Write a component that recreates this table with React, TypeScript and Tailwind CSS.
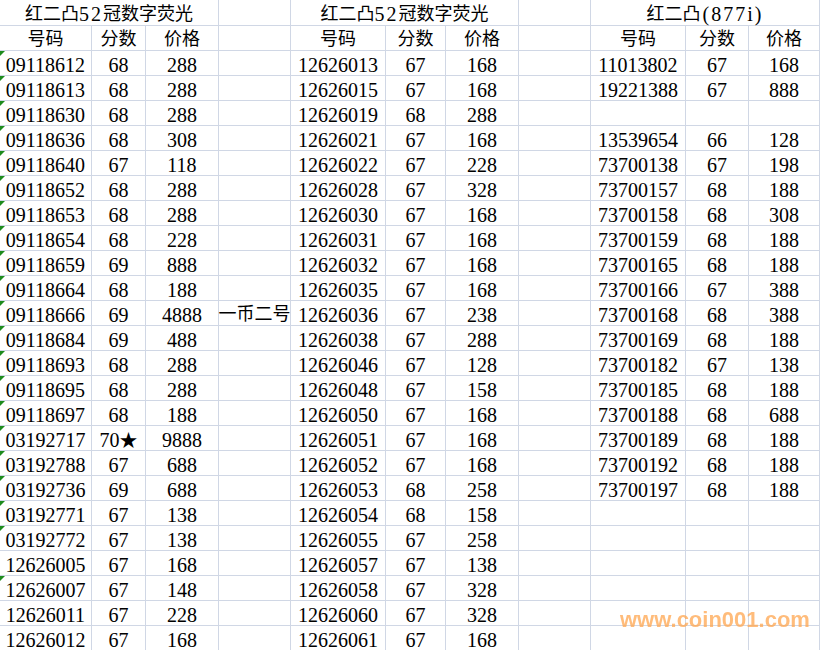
import React from "react";

type Row = {
  a: string;
  b: string;
  c: string;
  d?: string;
  e: string;
  f: string;
  g: string;
  i?: string;
  j?: string;
  k?: string;
  mark?: boolean;
};

const left: [string, string, string, boolean][] = [
  ["09118612", "68", "288", true],
  ["09118613", "68", "288", true],
  ["09118630", "68", "288", true],
  ["09118636", "68", "308", true],
  ["09118640", "67", "118", true],
  ["09118652", "68", "288", true],
  ["09118653", "68", "288", true],
  ["09118654", "68", "228", true],
  ["09118659", "69", "888", true],
  ["09118664", "68", "188", true],
  ["09118666", "69", "4888", true],
  ["09118684", "69", "488", true],
  ["09118693", "68", "288", true],
  ["09118695", "68", "288", true],
  ["09118697", "68", "188", true],
  ["03192717", "70★", "9888", true],
  ["03192788", "67", "688", true],
  ["03192736", "69", "688", true],
  ["03192771", "67", "138", true],
  ["03192772", "67", "138", true],
  ["12626005", "67", "168", false],
  ["12626007", "67", "148", true],
  ["12626011", "67", "228", false],
  ["12626012", "67", "168", false],
];

const middle: [string, string, string][] = [
  ["12626013", "67", "168"],
  ["12626015", "67", "168"],
  ["12626019", "68", "288"],
  ["12626021", "67", "168"],
  ["12626022", "67", "228"],
  ["12626028", "67", "328"],
  ["12626030", "67", "168"],
  ["12626031", "67", "168"],
  ["12626032", "67", "168"],
  ["12626035", "67", "168"],
  ["12626036", "67", "238"],
  ["12626038", "67", "288"],
  ["12626046", "67", "128"],
  ["12626048", "67", "158"],
  ["12626050", "67", "168"],
  ["12626051", "67", "168"],
  ["12626052", "67", "168"],
  ["12626053", "68", "258"],
  ["12626054", "68", "158"],
  ["12626055", "67", "258"],
  ["12626057", "67", "138"],
  ["12626058", "67", "328"],
  ["12626060", "67", "328"],
  ["12626061", "67", "168"],
];

const right: [string, string, string][] = [
  ["11013802", "67", "168"],
  ["19221388", "67", "888"],
  ["", "", ""],
  ["13539654", "66", "128"],
  ["73700138", "67", "198"],
  ["73700157", "68", "188"],
  ["73700158", "68", "308"],
  ["73700159", "68", "188"],
  ["73700165", "68", "188"],
  ["73700166", "67", "388"],
  ["73700168", "68", "388"],
  ["73700169", "68", "188"],
  ["73700182", "67", "138"],
  ["73700185", "68", "188"],
  ["73700188", "68", "688"],
  ["73700189", "68", "188"],
  ["73700192", "68", "188"],
  ["73700197", "68", "188"],
];

const rows: Row[] = left.map((l, idx) => ({
  a: l[0],
  b: l[1],
  c: l[2],
  mark: l[3],
  d: idx === 10 ? "一币二号" : "",
  e: middle[idx][0],
  f: middle[idx][1],
  g: middle[idx][2],
  i: right[idx]?.[0] ?? "",
  j: right[idx]?.[1] ?? "",
  k: right[idx]?.[2] ?? "",
}));

const cell =
  "relative flex items-center justify-center pt-[3px] whitespace-nowrap border-r border-b border-[#d0d7e5]";

const Score = ({ v }: { v: string }) => {
  if (v.endsWith("★")) {
    return (
      <span>
        {v.slice(0, -1)}
        <span className="text-[18px]">★</span>
      </span>
    );
  }
  return <span>{v}</span>;
};

export default function App() {
  return (
    <div className="relative w-[820px] h-[650px] overflow-hidden bg-white text-black font-['Liberation_Serif','Noto_Sans_CJK_SC',serif] text-[20px]">
      <div className="grid grid-cols-[92px_54px_73px_72px_95px_60px_73px_72px_95px_63px_1fr] grid-rows-[26px] auto-rows-[25px]">
        {/* titles */}
        <div className={`${cell} col-span-3 text-[18px]`}>
          红二凸<span className="text-[20px] tracking-[2px]">52</span>冠数字荧光
        </div>
        <div className={cell} />
        <div className={`${cell} col-span-3 text-[18px]`}>
          红二凸<span className="text-[20px] tracking-[2px]">52</span>冠数字荧光
        </div>
        <div className={cell} />
        <div className={`${cell} col-span-3 text-[18px]`}>
          红二凸<span className="text-[20px] tracking-[2px] ml-[2px]">(877i)</span>
        </div>

        {/* headers */}
        <div className={`${cell} text-[18px]`}>号码</div>
        <div className={`${cell} text-[18px]`}>分数</div>
        <div className={`${cell} text-[18px]`}>价格</div>
        <div className={cell} />
        <div className={`${cell} text-[18px]`}>号码</div>
        <div className={`${cell} text-[18px]`}>分数</div>
        <div className={`${cell} text-[18px]`}>价格</div>
        <div className={cell} />
        <div className={`${cell} text-[18px]`}>号码</div>
        <div className={`${cell} text-[18px]`}>分数</div>
        <div className={`${cell} text-[18px]`}>价格</div>

        {rows.map((r) => (
          <React.Fragment key={r.a}>
            <div className={cell}>
              {r.mark && (
                <span className="absolute left-0 top-0 w-[5px] h-[5px] bg-[#1e8c1e] [clip-path:polygon(0_0,100%_0,0_100%)]" />
              )}
              {r.a}
            </div>
            <div className={cell}>
              <Score v={r.b} />
            </div>
            <div className={cell}>{r.c}</div>
            <div className={`${cell} text-[18px]`}>{r.d}</div>
            <div className={cell}>{r.e}</div>
            <div className={cell}>{r.f}</div>
            <div className={cell}>{r.g}</div>
            <div className={cell} />
            <div className={cell}>{r.i}</div>
            <div className={cell}>{r.j}</div>
            <div className={cell}>{r.k}</div>
          </React.Fragment>
        ))}
      </div>

      {/* watermark */}
      <div className="absolute left-[620px] top-[609px] font-['Liberation_Sans',sans-serif] font-bold text-[22px] leading-none text-[#ffa54f]/75 blur-[0.5px]">
        www.coin001.com
      </div>
    </div>
  );
}
